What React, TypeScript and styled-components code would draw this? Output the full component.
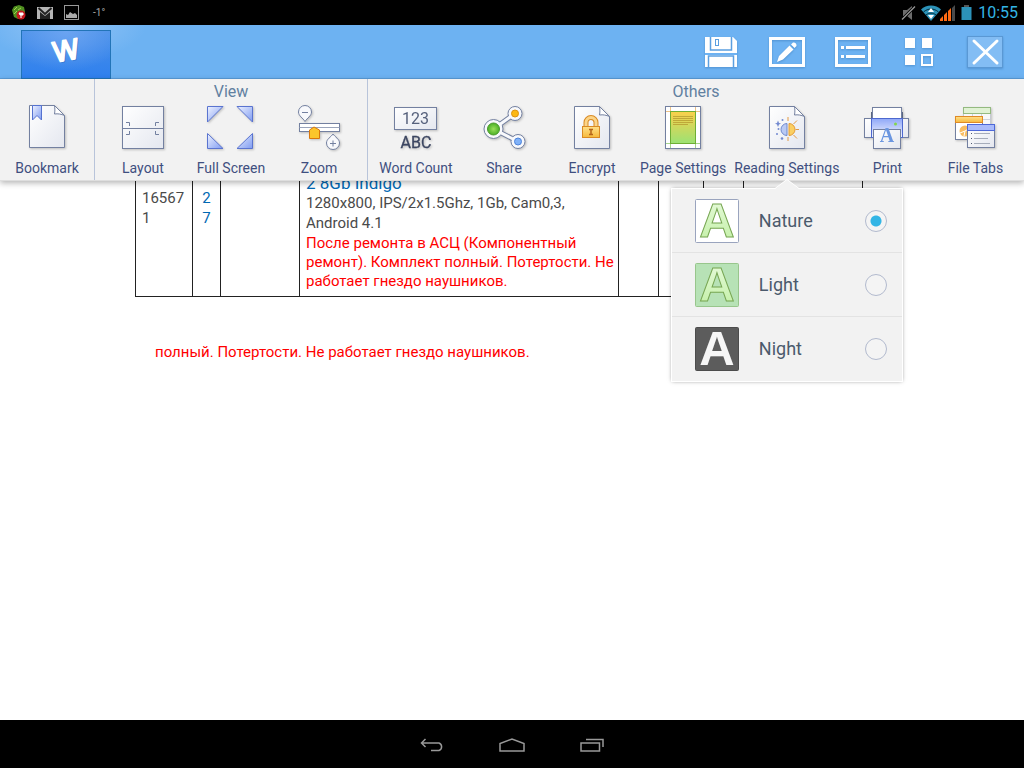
import React, { useState } from "react";
import styled, { createGlobalStyle, css } from "styled-components";

const GlobalStyle = createGlobalStyle`
  * { box-sizing: border-box; }
  body { margin: 0; background: #fff; font-family: Roboto, "Noto Sans", sans-serif; }
  button { font: inherit; border: 0; padding: 0; background: none; cursor: pointer; }
  svg { display: block; overflow: visible; flex: none; }
`;

const Screen = styled.div`
  display: flex;
  flex-direction: column;
  min-height: 100vh;
`;

/* ---------- system status bar ---------- */

const StatusBar = styled.header`
  display: flex;
  justify-content: space-between;
  align-items: center;
  height: 25px;
  padding: 0 6px 0 11px;
  background: #000;
`;

const StatusGroup = styled.div<{ $gap: number }>`
  display: flex;
  align-items: center;
  gap: ${(p) => p.$gap}px;
`;

const Temperature = styled.span`
  color: #aaa;
  font-size: 10px;
  line-height: 24px;
  margin-left: 3px;
`;

const Clock = styled.time`
  margin-left: 1px;
  color: #33b5e5;
  font-size: 16px;
  line-height: 24px;
`;

const SignalPair = styled.div`
  display: flex;
  align-items: center;
`;

/* ---------- application bar ---------- */

const TitleBar = styled.div`
  display: flex;
  justify-content: space-between;
  height: 54px;
  padding: 5px 6px 0 21px;
  border-bottom: 1px solid #5a9ddb;
  background: radial-gradient(ellipse 80px 36px at 66px 0, #93c4f6, #6db2f2 100%) #6db2f2;
`;

const LogoTab = styled.button`
  display: flex;
  justify-content: center;
  width: 90px;
  height: 49px;
  border: 1px solid #2274b8;
  background: radial-gradient(ellipse 60px 40px at 50% 0, #6ba4f2, transparent),
    linear-gradient(#4a90e8, #2f80ee);
`;

const TitleActions = styled.div`
  display: flex;
  height: 44px;
`;

const TitleButton = styled.button`
  display: flex;
  align-items: center;
  justify-content: center;
  width: 66px;
  color: #fff;
  filter: drop-shadow(0 1px 1px rgba(30, 90, 150, 0.35));
`;

/* ---------- ribbon ---------- */

const Ribbon = styled.nav`
  position: relative;
  z-index: 2;
  display: flex;
  height: 102px;
  background: #f2f2f2;
  border-bottom: 1px solid #dedede;
  box-shadow: 0 2px 6px rgba(0, 0, 0, 0.3);
`;

const RibbonGroup = styled.section<{ $grow?: boolean; $tight?: boolean }>`
  display: flex;
  flex-direction: column;
  padding: 0 ${(p) => (p.$tight ? 3 : 4)}px;
  ${(p) =>
    p.$grow
      ? css`
          flex: 1;
        `
      : css`
          border-right: 1px solid #b8c4da;
        `}
`;

const GroupTitle = styled.h2`
  margin: 0;
  height: 25px;
  color: #6180a0;
  font-size: 16px;
  font-weight: 400;
  line-height: 25px;
  text-align: center;
`;

const GroupItems = styled.div`
  display: flex;
`;

const ItemWrap = styled.div`
  position: relative;
`;

const RibbonButton = styled.button`
  display: flex;
  flex-direction: column;
  align-items: center;
  gap: 6px;
  min-width: 88px;
  height: 76px;
  padding: 0 4px;
  color: #3f4f80;
  font-size: 14px;
  line-height: 20px;
  white-space: nowrap;

  svg {
    filter: drop-shadow(1px 1px 1px rgba(0, 0, 0, 0.22));
  }
`;

/* ---------- reading mode menu ---------- */

const Menu = styled.fieldset`
  position: absolute;
  top: 100%;
  left: 50%;
  width: 230px;
  margin: 9px 0 0 -115px;
  padding: 0;
  border: 0;
  background: #f2f2f2;
  box-shadow: 0 0 0 1px #fff, 0 0 4px rgba(0, 0, 0, 0.5);
`;

const MenuArrow = styled.svg`
  position: absolute;
  bottom: 100%;
  left: 50%;
  margin-left: -12px;
`;

const MenuRow = styled.label`
  display: flex;
  align-items: center;
  height: 64px;
  padding: 0 15px 0 22px;
  color: #4b5a6c;
  font-size: 18px;
  line-height: 24px;
  cursor: pointer;

  &:not(:last-child) {
    border-bottom: 1px solid #e3e3e3;
  }
`;

const MenuText = styled.span`
  flex: 1;
  margin-left: 19px;
`;

const Radio = styled.input`
  appearance: none;
  width: 22px;
  height: 22px;
  margin: 0;
  border: 1px solid #b2bace;
  border-radius: 50%;
  background: #f4f4f4;

  &:checked {
    background: radial-gradient(circle, #33b5e5 5px, #f4f4f4 6px);
  }
`;

/* ---------- document ---------- */

const Page = styled.main`
  flex: 1;
  overflow: hidden;
  padding: 0 135px;
  background: #fff;
  color: #4a4a4a;
  font-size: 15px;
  line-height: 20px;
`;

const StockTable = styled.table`
  width: 727px;
  margin-top: -17px;
  border-collapse: collapse;
  table-layout: fixed;
`;

const Cell = styled.td<{ $lead?: boolean; $center?: boolean }>`
  padding: ${(p) => (p.$lead ? "23px 6px 6px" : "8px 2px 5px 6px")};
  border: 1px solid #222;
  vertical-align: top;
  overflow-wrap: anywhere;
  text-align: ${(p) => (p.$center ? "center" : "left")};
`;

const DocLink = styled.a`
  color: #0068b3;
  text-decoration: none;
`;

const Line = styled.div<{ $large?: boolean }>`
  font-size: ${(p) => (p.$large ? 17 : 15)}px;
`;

const Defect = styled.div`
  padding-top: 1px;
  color: #f00;
  line-height: 19px;
`;

const Repeat = styled.p`
  margin: 46px 20px 0;
  color: #f00;
  line-height: 19px;
`;

/* ---------- navigation bar ---------- */

const NavBar = styled.footer`
  display: flex;
  align-items: center;
  justify-content: center;
  height: 48px;
  padding-top: 2px;
  background: #000;
`;

const NavButton = styled.button`
  display: flex;
  align-items: center;
  justify-content: center;
  width: 80px;
  height: 46px;
`;

/* ---------- drawings ---------- */

const edge = "#7380a0";

const Gradients = () => (
  <svg width="0" height="0" style={{ position: "absolute" }} aria-hidden="true">
    <defs>
      <linearGradient id="paper" x1="0" y1="0" x2="1" y2="1">
        <stop offset="0" stopColor="#fff" />
        <stop offset="1" stopColor="#e4e7ef" />
      </linearGradient>
      <linearGradient id="blue" x1="0" y1="0" x2="1" y2="1">
        <stop offset="0" stopColor="#eef2ff" />
        <stop offset="1" stopColor="#7f9cf2" />
      </linearGradient>
      <linearGradient id="gold" x1="0" y1="0" x2="0" y2="1">
        <stop offset="0" stopColor="#ffe08a" />
        <stop offset="1" stopColor="#f6b93c" />
      </linearGradient>
      <linearGradient id="lime" x1="0" y1="0" x2="0" y2="1">
        <stop offset="0" stopColor="#fbd04a" />
        <stop offset="1" stopColor="#9be274" />
      </linearGradient>
      <linearGradient id="printer" x1="0" y1="0" x2="0" y2="1">
        <stop offset="0" stopColor="#8fa8f8" />
        <stop offset="1" stopColor="#f4f6ff" />
      </linearGradient>
      <linearGradient id="leaf" x1="0" y1="0" x2="0" y2="1">
        <stop offset="0" stopColor="#eafbe0" />
        <stop offset="1" stopColor="#c0efa2" />
      </linearGradient>
      <radialGradient id="greenBall">
        <stop offset="0" stopColor="#9be05a" />
        <stop offset="1" stopColor="#4bb026" />
      </radialGradient>
    </defs>
  </svg>
);

const Art = ({ children }: { children: React.ReactNode }) => (
  <svg width="48" height="48" viewBox="0 0 48 48" fill="none" aria-hidden="true">
    {children}
  </svg>
);

const Sheet = () => (
  <>
    <path d="M6.500 2.500H31.500L41.500 12.500V44.500H6.500Z" fill="url(#paper)" stroke={edge} />
    <path d="M31.500 2.500C32 6 32 8 31.500 11C35 10.500 38 11 41.500 12.500Z" fill="#fff" stroke={edge} />
  </>
);

const BookmarkArt = () => (
  <Art>
    <g transform="translate(0 -1)">
      <Sheet />
      <path d="M9.500 2.500H18.500V17L14 12.500L9.500 17Z" fill="url(#blue)" stroke="#5572d0" />
    </g>
  </Art>
);

const LayoutArt = () => (
  <Art>
    <rect x="3.500" y="2.500" width="41" height="42" fill="url(#paper)" stroke={edge} />
    <path d="M3.500 24.500H44.500M7 18.500H10.500V22M36.500 22V18.500H40M7 30.500H10.500V27M36.500 27V30.500H40" stroke={edge} />
  </Art>
);

const FullScreenArt = () => (
  <Art>
    <g fill="url(#blue)" stroke="#5a74d0">
      <path d="M.5 2.500H16L.5 18Z" />
      <path d="M30 2.500H45.500V18Z" />
      <path d="M.5 29.500V44.500H16Z" />
      <path d="M45.500 29.500V44.500H30Z" />
    </g>
  </Art>
);

const ZoomArt = () => (
  <Art>
    <rect x="4.500" y="19.500" width="40" height="8" fill="#fff" stroke={edge} />
    <path d="M4.500 23.500H44.500" stroke="#9aa4bb" />
    <g fill="#f8f9fc" stroke={edge}>
      <path d="M10 17.500C8 14 3.500 12 3.500 8a6.500 6.500 0 0 1 13 0C16.500 12 12 14 10 17.500Z" />
      <path d="M38 30C36 33 31.500 35 31.500 39a6.500 6.500 0 0 0 13 0C44.500 35 40 33 38 30Z" />
    </g>
    <path d="M7 8.500H13M35 39.500H41M38 36.500V42.500" stroke={edge} />
    <path d="M14.500 26L19 23L24.500 26V34.500H14.500Z" fill="#fbc52c" stroke="#d9760c" />
  </Art>
);

const WordCountArt = () => (
  <Art>
    <rect x="2.500" y="3.500" width="42" height="22" fill="url(#paper)" stroke={edge} />
    <text x="23.500" y="20" fontSize="16" textAnchor="middle" fill="#56617c">123</text>
    <text x="24" y="44" fontSize="16" textAnchor="middle" fill="#3c4661" stroke="#3c4661" strokeWidth=".3">ABC</text>
  </Art>
);

const ShareArt = () => (
  <Art>
    <path d="M13.500 25L35 9.500M13.500 25L38 37.500" stroke={edge} strokeWidth="5" />
    <g fill="#f8f9fc" stroke={edge}>
      <circle cx="13.500" cy="25" r="9.500" />
      <circle cx="35" cy="9.500" r="7" />
      <circle cx="38" cy="37.500" r="7" />
    </g>
    <path d="M13.500 25L35 9.500M13.500 25L38 37.500" stroke="#f8f9fc" strokeWidth="3" />
    <circle cx="13.500" cy="25" r="6" fill="url(#greenBall)" stroke="#4b9a2c" />
    <circle cx="35" cy="9.500" r="3.500" fill="#fcb813" stroke="#dd9310" />
    <circle cx="38" cy="37.500" r="3.500" fill="#7fb1f8" stroke="#4d83da" />
  </Art>
);

const EncryptArt = () => (
  <Art>
    <Sheet />
    <path d="M18 23V18.500a5 5 0 0 1 10 0V23" stroke="#d98a24" strokeWidth="5" />
    <path d="M18 23V18.500a5 5 0 0 1 10 0V23" stroke="#fbd488" strokeWidth="3" />
    <rect x="14.500" y="22.500" width="17" height="11" fill="url(#gold)" stroke="#d98a24" />
    <path d="M21 25.500H25M23 25V30M21 30.500H25" stroke="#b5651a" strokeWidth="1.500" />
  </Art>
);

const PageSettingsArt = () => (
  <Art>
    <rect x="6.500" y="2.500" width="35" height="42" fill="#fff" stroke={edge} />
    <path d="M7 7.500H41M11.500 3V7" stroke="#ecc288" />
    <path d="M36.500 3V7" stroke="#ecc288" />
    <path d="M7 39.500H41M11.500 39V44M36.500 39V44" stroke="#a5d58b" />
    <rect x="11.500" y="7.500" width="25" height="32" fill="url(#lime)" stroke="#6fae34" />
    <path d="M14 12.500H34M14 14.500H34M14 16.500H34M14 18.500H34M14 20.500H29" stroke="#b89c31" strokeWidth=".8" />
  </Art>
);

const ReadingArt = () => (
  <Art>
    <Sheet />
    <path d="M24 19.500a6 6 0 0 0 0 12Z" fill="#b9c9f4" stroke="#6f88cc" />
    <path d="M26 19.500a6 6 0 0 1 0 12Z" fill="#fbcf62" stroke="#e39a35" />
    <path d="M25 13V17M25 33V37M32.500 25.500H36M30.500 20L34 16.500M30.500 31L34 34.500" stroke="#e39a45" />
    <path d="M15 16.500L16 19L18 19.500L16 20.500L15 23L14 20.500L12 19.500L14 19Z" fill="#7289d0" />
    <g fill="#7289d0">
      <circle cx="19.500" cy="16" r="1" />
      <circle cx="15.500" cy="25" r="1" />
      <circle cx="14" cy="30" r="1" />
      <circle cx="19" cy="34.500" r="1.300" />
    </g>
  </Art>
);

const PrintArt = () => (
  <Art>
    <rect x="8" y="8" width="32" height="8" fill="#596681" />
    <rect x="9.500" y="3.500" width="29" height="14" fill="#fff" stroke={edge} />
    <rect x="1.500" y="14.500" width="44" height="19" fill="url(#paper)" stroke={edge} />
    <rect x="8.500" y="14.500" width="31" height="19" fill="url(#printer)" stroke="#4d68cf" />
    <circle cx="32.500" cy="20" r="1.500" fill="#83d64b" />
    <rect x="10.500" y="25.500" width="27" height="19" fill="url(#paper)" stroke={edge} />
    <text x="24" y="38" fontFamily="Liberation Serif, serif" fontWeight="700" fontSize="20" textAnchor="middle" fill="#6b96e0">A</text>
  </Art>
);

const FileTabsArt = () => (
  <Art>
    <rect x="12.500" y="3.500" width="27" height="22" fill="#f7f8f9" stroke="#c5cad2" />
    <path d="M21.500 9V16M30.500 9V16M13 15.500H39" stroke="#cfd4dc" />
    <rect x="12.500" y="3.500" width="27" height="6" fill="#e0f2d4" stroke="#94ba80" />
    <rect x="4.500" y="12.500" width="27" height="23" fill="#fff" stroke={edge} />
    <circle cx="14" cy="27" r="5.500" fill="#f8bd62" />
    <path d="M14 27L19 24M14 27L9 29M14 27L13 32" stroke="#fff" />
    <rect x="4.500" y="12.500" width="27" height="6" fill="url(#gold)" stroke="#df8a26" />
    <rect x="16.500" y="20.500" width="27" height="23" fill="url(#paper)" stroke={edge} />
    <path d="M23 29.500H39M23 34.500H37M23 39.500H39" stroke="#a5acba" />
    <path d="M20 29.500H21M20 34.500H21M20 39.500H21" stroke="#505a72" />
    <rect x="16.500" y="20.500" width="27" height="6" fill="#a9bbfb" stroke="#4d68d8" />
  </Art>
);

const modes = {
  Nature: { back: "#fff", frame: "#9aa4be", fill: "url(#leaf)", line: "#77a653" },
  Light: { back: "#b7e2b6", frame: "#98c68c", fill: "url(#leaf)", line: "#77a653" },
  Night: { back: "#5c5c5c", frame: "#4c4c4c", fill: "#f6f6f6", line: "none" },
};
type Mode = keyof typeof modes;

const ModeArt = ({ mode }: { mode: Mode }) => {
  const m = modes[mode];
  return (
    <svg width="46" height="46" viewBox="0 0 46 46" aria-hidden="true">
      <rect x="1.500" y="1.500" width="43" height="43" rx="1" fill={m.back} stroke={m.frame} />
      <text
        x="23"
        y="39"
        fontFamily="Liberation Sans, sans-serif"
        fontWeight="700"
        fontSize="49"
        textAnchor="middle"
        fill={m.fill}
        stroke={m.line}
      >
        A
      </text>
    </svg>
  );
};

/* ---------- bars ---------- */

const Status = () => (
  <StatusBar>
    <StatusGroup $gap={11}>
      <svg width="15" height="15" viewBox="0 0 15 15" aria-hidden="true">
        <path d="M1 5L3 1.500L8 0L13 2L14 7L12 12L7 14L3 12Z" fill="#4f8f20" />
        <path d="M3 5L6 2M7 5L10 3M3 9L6 6" stroke="#a4cf4e" />
        <circle cx="10" cy="10" r="4.500" fill="#c41820" />
        <path d="M8 8H12V10H9ZM10 10V13" stroke="#fff" fill="#fff" />
      </svg>
      <svg width="16" height="12" viewBox="0 0 16 12" aria-hidden="true">
        <rect width="16" height="12" fill="#b5b5b5" />
        <path d="M1.500 1L8 7L14.500 1" fill="none" stroke="#222" strokeWidth="2" />
        <path d="M3 12V5L8 9L13 5V12Z" fill="#222" />
      </svg>
      <svg width="15" height="15" viewBox="0 0 15 15" aria-hidden="true">
        <rect x=".5" y=".5" width="14" height="14" fill="none" stroke="#999" />
        <path d="M2 13V9L4 10L6 7L9 9L11 8L13 10V13Z" fill="#aaa" />
      </svg>
      <Temperature>-1°</Temperature>
    </StatusGroup>
    <StatusGroup $gap={5}>
      <svg width="14" height="14" viewBox="0 0 14 14" aria-hidden="true">
        <path d="M1 4H5L10 0V14L5 10H1Z" fill="#6c6c6c" />
        <path d="M0 13.500L13 .5" stroke="#000" strokeWidth="3" />
        <path d="M0 13.500L13 .5" stroke="#999" strokeWidth="1.200" />
      </svg>
      <SignalPair>
        <svg width="19" height="16" viewBox="0 0 19 16" aria-hidden="true">
          <path d="M0 4.500C5-1 15-1 20 4.500L10 16Z" fill="#2c92b8" />
          <path d="M2.500 7C7 3 13 3 17.500 7M5 10C8 7.500 12 7.500 15 10" fill="none" stroke="#06303e" />
          <path d="M10 3L13 7H7ZM10 14L7 10H13Z" fill="#fff" />
        </svg>
        <svg width="16" height="16" viewBox="0 0 16 16" aria-hidden="true">
          <path d="M0 16V14L3 11V16ZM4 16V10L7 7V16ZM8 16V6L11 3V16Z" fill="#ff6a13" />
          <path d="M12 16V3L15 0V16Z" fill="#4a4a4a" />
        </svg>
      </SignalPair>
      <svg width="11" height="15" viewBox="0 0 11 15" aria-hidden="true">
        <rect x="3" width="5" height="2" fill="#555" />
        <rect x=".5" y="2" width="10" height="13" fill="#2c92b8" />
      </svg>
      <Clock>10:55</Clock>
    </StatusGroup>
  </StatusBar>
);

const Title = () => (
  <TitleBar>
    <LogoTab aria-label="Writer">
      <svg width="44" height="42" viewBox="0 0 44 42" aria-hidden="true">
        <g
          transform="rotate(-10 22 20)"
          fontFamily="Inter, sans-serif"
          fontSize="27"
          textAnchor="middle"
          strokeWidth="2"
          strokeLinejoin="round"
        >
          <text x="23" y="30" fill="#1f5fae" stroke="#1f5fae" opacity=".4">W</text>
          <text x="22" y="29" fill="#fff" stroke="#fff">W</text>
        </g>
      </svg>
    </LogoTab>
    <TitleActions>
      <TitleButton aria-label="Save">
        <svg width="32" height="30" viewBox="0 0 32 30">
          <path d="M0 0H28L32 4V30H0Z" fill="#fff" />
          <path d="M5.500 0V13H26.500V0M3.500 30V19H28.500V30" fill="none" stroke="#5b9fe0" strokeWidth="1.500" />
          <path d="M0 17H32" stroke="#6db2f2" strokeWidth="2" />
          <rect x="10.500" y="2.500" width="3" height="6" fill="#fff" stroke="#5b9fe0" />
        </svg>
      </TitleButton>
      <TitleButton aria-label="Edit">
        <svg width="36" height="30" viewBox="0 0 36 30">
          <rect x="1.500" y="1.500" width="33" height="27" fill="none" stroke="#fff" strokeWidth="3" />
          <path d="M8 25L10 19L20.500 8.500L24.500 12.500L14 22.500ZM22 7.500L24 5.500C26 5 28 7 27.500 9L25.500 11Z" fill="#fff" />
        </svg>
      </TitleButton>
      <TitleButton aria-label="Outline">
        <svg width="36" height="30" viewBox="0 0 36 30">
          <rect x="1.500" y="1.500" width="33" height="27" fill="none" stroke="#fff" strokeWidth="3" />
          <path d="M6 10.500H9M11 10.500H30M6 19.500H9M11 19.500H30" stroke="#fff" strokeWidth="3" />
        </svg>
      </TitleButton>
      <TitleButton aria-label="Tools">
        <svg width="28" height="28" viewBox="0 0 28 28">
          <path d="M0 0H10V10H0ZM17 0H27V10H17ZM0 17H10V27H0Z" fill="#fff" />
          <rect x="17" y="17" width="10" height="10" fill="none" stroke="#fff" strokeWidth="2" />
        </svg>
      </TitleButton>
      <TitleButton aria-label="Close">
        <svg width="36" height="32" viewBox="0 0 36 32">
          <rect x=".5" y=".5" width="35" height="31" fill="#83bdf4" stroke="#5a98d4" />
          <path d="M7 5L30 27M30 5L7 27" stroke="#fff" strokeWidth="3" strokeLinecap="round" />
        </svg>
      </TitleButton>
    </TitleActions>
  </TitleBar>
);

const Tool = ({ label, art, children }: { label: string; art: React.ReactNode; children?: React.ReactNode }) => (
  <ItemWrap>
    <RibbonButton>
      {art}
      {label}
    </RibbonButton>
    {children}
  </ItemWrap>
);

const ReadingMenu = () => {
  const [mode, setMode] = useState<Mode>("Nature");
  return (
    <Menu aria-label="Reading Settings">
      <MenuArrow width="24" height="10" viewBox="0 0 24 10" aria-hidden="true">
        <path d="M0 10L12 0L24 10V12H0Z" fill="#f2f2f2" />
        <path d="M0 9.500L12 .5L24 9.500" fill="none" stroke="#fff" />
      </MenuArrow>
      {(Object.keys(modes) as Mode[]).map((name) => (
        <MenuRow key={name}>
          <ModeArt mode={name} />
          <MenuText>{name}</MenuText>
          <Radio type="radio" name="reading-mode" checked={mode === name} onChange={() => setMode(name)} />
        </MenuRow>
      ))}
    </Menu>
  );
};

const columns = [57, 28, 79, 319, 40, 45, 40, 119];

export default function App() {
  return (
    <Screen>
      <GlobalStyle />
      <Gradients />
      <Status />
      <Title />
      <Ribbon>
        <RibbonGroup $tight>
          <GroupTitle />
          <GroupItems>
            <Tool label="Bookmark" art={<BookmarkArt />} />
          </GroupItems>
        </RibbonGroup>
        <RibbonGroup>
          <GroupTitle>View</GroupTitle>
          <GroupItems>
            <Tool label="Layout" art={<LayoutArt />} />
            <Tool label="Full Screen" art={<FullScreenArt />} />
            <Tool label="Zoom" art={<ZoomArt />} />
          </GroupItems>
        </RibbonGroup>
        <RibbonGroup $grow>
          <GroupTitle>Others</GroupTitle>
          <GroupItems>
            <Tool label="Word Count" art={<WordCountArt />} />
            <Tool label="Share" art={<ShareArt />} />
            <Tool label="Encrypt" art={<EncryptArt />} />
            <Tool label="Page Settings" art={<PageSettingsArt />} />
            <Tool label="Reading Settings" art={<ReadingArt />}>
              <ReadingMenu />
            </Tool>
            <Tool label="Print" art={<PrintArt />} />
            <Tool label="File Tabs" art={<FileTabsArt />} />
          </GroupItems>
        </RibbonGroup>
      </Ribbon>
      <Page>
        <StockTable>
          <colgroup>
            {columns.map((w, i) => (
              <col key={i} width={w} />
            ))}
          </colgroup>
          <tbody>
            <tr>
              <Cell $lead>165671</Cell>
              <Cell $lead $center>
                <DocLink href="#27">27</DocLink>
              </Cell>
              <Cell />
              <Cell>
                <Line $large>
                  <DocLink href="#indigo">2 8Gb Indigo</DocLink>
                </Line>
                <Line>1280x800, IPS/2x1.5Ghz, 1Gb, Cam0,3, Android 4.1</Line>
                <Defect>
                  После ремонта в АСЦ (Компонентный ремонт). Комплект полный. Потертости. Не работает гнездо наушников.
                </Defect>
              </Cell>
              <Cell />
              <Cell />
              <Cell />
              <Cell />
            </tr>
          </tbody>
        </StockTable>
        <Repeat>полный. Потертости. Не работает гнездо наушников.</Repeat>
      </Page>
      <NavBar>
        <NavButton aria-label="Back">
          <svg width="24" height="14" viewBox="0 0 24 14" fill="none" stroke="#999" strokeWidth="1.500">
            <path d="M5.500 1L1.500 5L5.500 9M1.500 5H19a4 4 0 0 1 0 7.500H11" />
          </svg>
        </NavButton>
        <NavButton aria-label="Home">
          <svg width="26" height="14" viewBox="0 0 26 14" fill="none" stroke="#999" strokeWidth="1.500">
            <path d="M1 13V5.500L13 1L25 5.500V13Z" />
          </svg>
        </NavButton>
        <NavButton aria-label="Recent apps">
          <svg width="24" height="14" viewBox="0 0 24 14" fill="none" stroke="#999" strokeWidth="1.500">
            <path d="M1 5H19.500V13H1ZM6 1.500H23V9" />
          </svg>
        </NavButton>
      </NavBar>
    </Screen>
  );
}
